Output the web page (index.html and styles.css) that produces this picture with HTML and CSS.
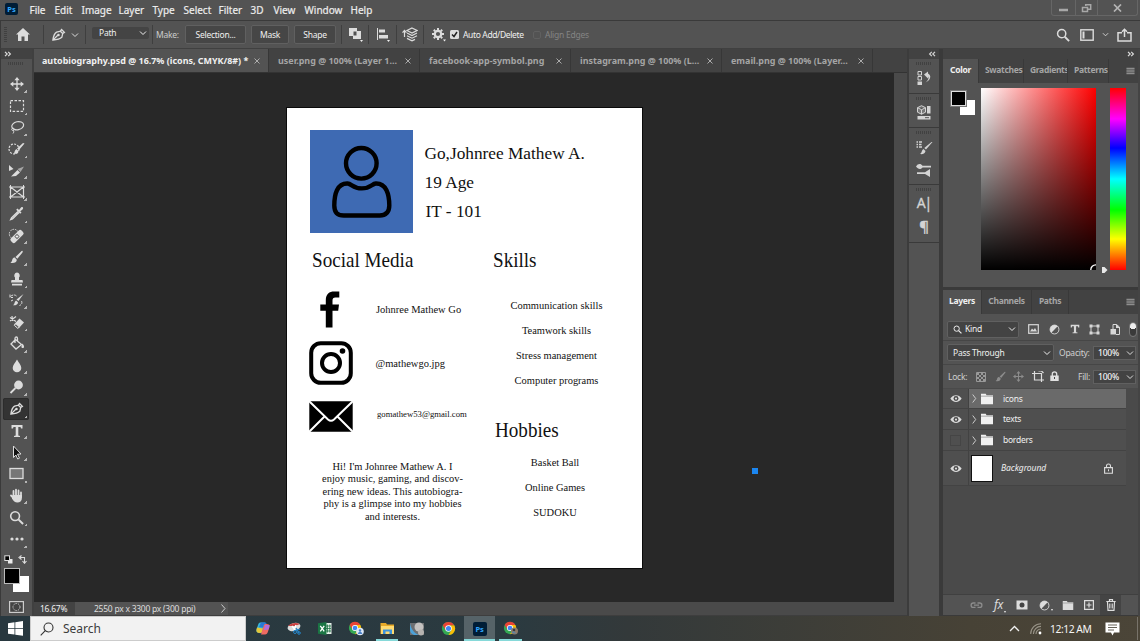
FILE: index.html
```html
<!DOCTYPE html>
<html lang="en">
<head>
<meta charset="utf-8">
<title>autobiography.psd</title>
<link rel="stylesheet" href="styles.css">
</head>
<body>
<svg class="sprite" aria-hidden="true">
  <symbol id="chev" viewBox="0 0 8 8"><path d="M1 2.500l3 3 3-3" fill="none" stroke="currentColor" stroke-width="1"/></symbol>
  <symbol id="close" viewBox="0 0 8 8"><path d="M1.500 1.500l5 5M6.500 1.500l-5 5" stroke="#b8b8b8" stroke-width=".9"/></symbol>
  <symbol id="menu" viewBox="0 0 10 8"><path d="M.5 1h9M.5 3h9M.5 5h9M.5 7h9" stroke="currentColor" stroke-width="1"/></symbol>
  <symbol id="dbl" viewBox="0 0 8 6"><path d="M1 .8L3.200 3 1 5.200M4.200 .8L6.400 3 4.200 5.200" fill="none" stroke="currentColor" stroke-width="1.200"/></symbol>
  <symbol id="pen" viewBox="0 0 16 16"><path d="M2 14c.5-4 1.500-7 4-8.500l4-1 2.500 2.500-1 4C9.500 13 6 13.700 2 14zM2 14l5.500-5.500M10 4.500l1.300-1.800 3 3-1.800 1.300" fill="none" stroke="currentColor" stroke-width="1.400"/><circle cx="8" cy="8.500" r="1.300" fill="currentColor"/></symbol>
  <symbol id="arrows" viewBox="0 0 16 16"><path d="M8 2v12M2 8h12" stroke="currentColor" stroke-width="1.500"/><path d="M8 0l3 3.800H5zM8 16l3-3.800H5zM0 8l3.800-3v6zM16 8l-3.800-3v6z" fill="currentColor"/></symbol>
  <symbol id="brush" viewBox="0 0 16 16"><path d="M14.800 1c.8.500.3 1.500-.4 2.400L9 10 6.800 8 13 2c.6-.6 1.200-1.300 1.800-1zM6 8.700L8.300 11c.3 3-3.300 4.500-7.300 3.500 2-1 1.800-2.200 2.300-3.800.5-1.400 1.500-2 2.700-2z" fill="currentColor"/></symbol>
  <symbol id="search" viewBox="0 0 16 16"><circle cx="6.500" cy="6.500" r="4.700" fill="none" stroke="currentColor" stroke-width="1.700"/><path d="M10 10l5 5" stroke="currentColor" stroke-width="2.100"/></symbol>
  <symbol id="folder" viewBox="0 0 16 14"><path d="M1 1h5.500l1 1.500H15V13H1z" fill="currentColor"/><path d="M1 3.700h14" stroke="#777" stroke-width=".7"/></symbol>
  <symbol id="eye" viewBox="0 0 16 12"><path d="M.5 6c3.500-6 11.500-6 15 0-3.500 6-11.500 6-15 0z" fill="currentColor"/><circle cx="8" cy="6" r="3.300" fill="#4b4b4b"/><circle cx="8" cy="6" r="1.500" fill="currentColor"/></symbol>
  <symbol id="adjust" viewBox="0 0 16 16"><circle cx="8" cy="8" r="6.500" fill="currentColor"/><path d="M3.400 12.600L12.600 3.400A6.500 6.500 0 0 1 3.400 12.600z" fill="#535353"/><circle cx="8" cy="8" r="6.500" fill="none" stroke="currentColor" stroke-width="1.200"/></symbol>
  <symbol id="frame" viewBox="0 0 16 14"><path d="M1.500 2h13v10h-13zM1.500 2l13 10M14.500 2l-13 10" fill="none" stroke="currentColor" stroke-width="1.200"/><path d="M0 2h2M14 2h2M0 12h2M14 12h2M1.500 0v2M14.500 0v2M1.500 12v2M14.500 12v2" stroke="currentColor"/></symbol>
  <symbol id="chrome" viewBox="0 0 16 16"><circle cx="8" cy="8" r="7" fill="#34a853"/><path d="M8 15l3-5.200L8 4.500h6.100A7 7 0 0 1 8 15z" fill="#fbbc05"/><path d="M1.900 4.500A7 7 0 0 1 14.100 4.500H8L5 7z" fill="#ea4335"/><path d="M1.900 4.500L5 9.800 8 8V4.500z" fill="#ea4335"/><circle cx="8" cy="8" r="3.500" fill="#fff"/><circle cx="8" cy="8" r="2.700" fill="#4285f4"/></symbol>
</svg>

<div class="app">
  <header class="menubar">
    <div class="ps-logo">Ps</div>
    <nav class="menus"><span>File</span><span>Edit</span><span>Image</span><span>Layer</span><span>Type</span><span>Select</span><span>Filter</span><span>3D</span><span>View</span><span>Window</span><span>Help</span></nav>
    <div class="window-controls">
      <span><svg width="9" height="8" viewBox="0 0 9 8"><path d="M0 6h9" stroke="#a8a8a8" stroke-width="2.500"/></svg></span>
      <span><svg width="11" height="10" viewBox="0 0 11 10"><path d="M4.700 3V1.700h5v4.500H7M1.500 4.500h5v4h-5z" fill="none" stroke="#a8a8a8" stroke-width="1.500"/></svg></span>
      <span><svg width="9" height="8" viewBox="0 0 9 8"><path d="M1 .5l7 7M8 .5l-7 7" stroke="#b4b4b4" stroke-width="1.700"/></svg></span>
    </div>
  </header>

  <div class="options">
    <i class="grip-v"></i>
    <svg class="home" width="14" height="13" viewBox="0 0 14 13"><path d="M7 0l7 6.500h-2V13H8.500V8.500h-3V13H2V6.500H0z" fill="#dcdcdc"/></svg>
    <i class="sep"></i>
    <svg class="opt-pen" width="15" height="15"><use href="#pen"/></svg>
    <svg class="opt-chev" width="8" height="8"><use href="#chev"/></svg>
    <i class="sep"></i>
    <div class="path-select"><span>Path</span><svg width="8" height="8"><use href="#chev"/></svg></div>
    <i class="sep"></i>
    <span class="make">Make:</span>
    <div class="btn btn-selection">Selection...</div>
    <div class="btn btn-mask">Mask</div>
    <div class="btn btn-shape">Shape</div>
    <i class="sep"></i>
    <svg class="opt-op" width="15" height="15" viewBox="0 0 15 15"><path d="M1 1h8v3h4v8H5V9H1z" fill="#dcdcdc"/><path d="M5.500 4.500h3v4h-3z" fill="#505050"/><path d="M12 13h3l-1.500 2z" fill="#eee"/></svg>
    <i class="sep"></i>
    <svg class="opt-align" width="15" height="15" viewBox="0 0 15 15"><path d="M1.500 1v12" stroke="#dcdcdc"/><path d="M3 2.500h6v3H3zM3 8h9v3.500H3z" fill="#dcdcdc"/><path d="M11 13h3l-1.500 2z" fill="#eee"/></svg>
    <i class="sep"></i>
    <svg class="opt-arrange" width="16" height="15" viewBox="0 0 16 15"><path d="M2.500 10V4M.5 5.700l2-2.200 2 2.200" fill="none" stroke="#dcdcdc" stroke-width="1.200"/><path d="M10 1l5 2.500-5 2.500-5-2.500zM5 6l5 2.500L15 6M5 8.700l5 2.500 5-2.500M5 11.400l5 2.500 3-1.500" fill="none" stroke="#dcdcdc" stroke-width="1.200"/></svg>
    <i class="sep"></i>
    <svg class="opt-gear" width="15" height="15" viewBox="0 0 15 15"><circle cx="6" cy="7" r="3.200" fill="none" stroke="#dcdcdc" stroke-width="2.200"/><path d="M6 1v2M6 11v2M0 7h2M10 7h2M1.800 2.800l1.400 1.400M8.800 9.800l1.400 1.400M10.200 2.800L8.800 4.200M3.200 9.800l-1.400 1.400" stroke="#dcdcdc" stroke-width="2"/><path d="M11 12.500h3l-1.500 2z" fill="#eee"/></svg>
    <svg class="check" width="9" height="9" viewBox="0 0 9 9"><rect width="9" height="9" rx="1.500" fill="#dcdcdc"/><path d="M2 4.500l2 2 3-4.500" fill="none" stroke="#222" stroke-width="1.500"/></svg>
    <span class="auto">Auto Add/Delete</span>
    <i class="uncheck"></i>
    <span class="align-edges">Align Edges</span>
    <div class="opt-right">
      <svg width="14" height="14"><use href="#search"/></svg>
      <svg width="14" height="12" viewBox="0 0 14 12"><rect x=".8" y=".8" width="12.400" height="10.400" fill="none" stroke="#dcdcdc" stroke-width="1.400"/><path d="M2.500 2.500h2v7h-2z" fill="#dcdcdc"/></svg>
      <svg width="7" height="7" viewBox="0 0 8 8"><use href="#chev"/></svg>
      <svg width="15" height="14" viewBox="0 0 15 14"><path d="M5 4.700H1V13h13V4.700h-4M7.500 9V1.500M5 3.700l2.500-2.500L10 3.700" fill="none" stroke="#dcdcdc" stroke-width="1.500"/></svg>
    </div>
  </div>

  <main class="workspace">
    <aside class="toolbar">
      <div class="tool-head"><svg width="8" height="6"><use href="#dbl"/></svg></div>
      <i class="grip"></i>
      <div class="tools">
        <div class="tool"><svg width="14" height="14"><use href="#arrows"/></svg></div>
        <div class="tool"><svg width="16" height="14" viewBox="0 0 16 14"><rect x="1.500" y="1.700" width="13" height="10.600" fill="none" stroke="currentColor" stroke-width="1.200" stroke-dasharray="2.500 1.500"/></svg></div>
        <div class="tool"><svg width="16" height="14" viewBox="0 0 16 14"><ellipse cx="8.700" cy="5.700" rx="6" ry="4" transform="rotate(-12 8.700 5.700)" fill="none" stroke="currentColor" stroke-width="1.200"/><path d="M4 8c-2 .5-1.500 3 .3 2.500C6 10 5 8 4 8zm.5 2.500c.5 1 .3 2-.5 3" fill="none" stroke="currentColor"/></svg></div>
        <div class="tool"><svg width="17" height="14" viewBox="0 0 17 14"><circle cx="6" cy="7" r="5" fill="none" stroke="currentColor" stroke-width="1.200" stroke-dasharray="2 1.300"/><path d="M16.500 1.500L11 8 9 6.500 15 1zM8.500 7l2 2c-.3 2.500-3 3-5 2.700 1.300-1 1-3.700 3-4.700z" fill="currentColor"/></svg></div>
        <div class="tool"><svg width="17" height="14" viewBox="0 0 17 14"><path d="M1 1l4.500 4L1 7z" fill="currentColor"/><path d="M3 12.500l6.500-6.500 2.500 2.500-4 3.500z" fill="currentColor"/><path d="M9.500 5L16 2.500 12.500 8z" fill="#a6a6a6"/></svg></div>
        <div class="tool"><svg width="16" height="14"><use href="#frame"/></svg></div>
        <div class="tool"><svg width="15" height="15" viewBox="0 0 15 15"><path d="M9 5.500l-6.500 6.300-.8 1.800 1.800-.7L10 6.500" fill="none" stroke="currentColor" stroke-width="1.400"/><path d="M8.500 2.500l4 4-1.300 1.300-4-4zM10 4l2-2.500c2-1.500 2.800.8 1.500 2L11 5.500z" fill="currentColor"/></svg></div>
        <div class="tool"><svg width="17" height="16" viewBox="0 0 17 16"><circle cx="6" cy="6" r="4.700" fill="none" stroke="currentColor" stroke-dasharray="1.500 1"/><rect x="1.500" y="5.500" width="15" height="6" rx="2" transform="rotate(-45 9 8.500)" fill="currentColor"/><path d="M6.300 8.500L9 5.800l2.700 2.700L9 11.200z" fill="#666"/><path d="M7.700 8.500h2.600M9 7.200v2.600" stroke="#eee"/></svg></div>
        <div class="tool"><svg width="15" height="14"><use href="#brush"/></svg></div>
        <div class="tool"><svg width="14" height="14" viewBox="0 0 14 14"><path d="M7 .5a3 3 0 0 1 2 5V8h3.500l.5 2.500H1L1.500 8H5V5.500A3 3 0 0 1 7 .5zM2 11.700h10v1.800H2z" fill="currentColor"/></svg></div>
        <div class="tool"><svg width="16" height="15" viewBox="0 0 16 15"><path d="M14.500 1L9.500 8l-2-1.500zM7 7.500l2 1.700c0 2.500-2.500 3.300-5 3C6 11 5 9 7 7.500z" fill="currentColor"/><path d="M1.500 3.500c2-2 4.500-2 6-.5M1 1.500v3h3M12.500 8c1 2 0 4-2 4.500M2 8l2-1" fill="none" stroke="currentColor" stroke-dasharray="3 1"/></svg></div>
        <div class="tool"><svg width="16" height="15" viewBox="0 0 16 15"><path d="M1 2.500l6 4M1 6l6-4.500M3 1l.5 5" stroke="currentColor" stroke-width="1.200"/><path d="M10.500 3.500l4.500 4-5.500 6L5 9.500z" fill="currentColor"/><path d="M6.800 8.700l3.500 3.200-1.500 1.500-3.500-3z" fill="#666" stroke="currentColor"/></svg></div>
        <div class="tool"><svg width="16" height="15" viewBox="0 0 16 15"><path d="M6.500 3.500l6 5-5.500 4.500-5-5zM6 7V2.500C6 .5 8.500.5 8.500 2.500V5" fill="none" stroke="currentColor" stroke-width="1.300"/><path d="M13.500 7.500c2 2.500 2 4.500.2 4.500s-1.500-2-.2-4.500z" fill="currentColor"/></svg></div>
        <div class="tool"><svg width="12" height="14" viewBox="0 0 12 14"><path d="M6 .5c2 3.500 4.300 5.500 4.300 8.500a4.300 4.300 0 0 1-8.600 0C1.700 6 4 4 6 .5z" fill="currentColor"/></svg></div>
        <div class="tool"><svg width="15" height="14" viewBox="0 0 15 14"><circle cx="9.500" cy="5" r="4.400" fill="currentColor"/><path d="M6.500 8L1.500 13" stroke="currentColor" stroke-width="1.800"/></svg></div>
        <div class="tool active"><svg width="15" height="15"><use href="#pen"/></svg></div>
        <div class="tool"><svg width="14" height="14" viewBox="0 0 14 14"><path d="M1.500 1h11v3.500h-1.500L10.500 3H8.300v8.500L10 12v1H4v-1l1.700-.5V3H3.500L3 4.500H1.500z" fill="currentColor"/></svg></div>
        <div class="tool"><svg width="12" height="15" viewBox="0 0 12 15"><path d="M2.500 1l7.500 8-3.500.2 2 4-1.800.8-1.800-4-2.400 2.500z" fill="#111" stroke="currentColor"/></svg></div>
        <div class="tool"><svg width="15" height="13" viewBox="0 0 15 13"><rect x="1" y="1.500" width="13" height="10" fill="#777" stroke="currentColor" stroke-width="1.300"/></svg></div>
        <div class="tool"><svg width="15" height="15" viewBox="0 0 15 15"><path d="M4.500 8V3M7 7V1.700M9.500 7.500V2.500M12 9V4.500M4.500 10L2 7.500" stroke="currentColor" stroke-width="1.800" stroke-linecap="round"/><path d="M3.600 7h9.300v3c0 3-2 4.500-4.500 4.500S4.500 13 3 10.500z" fill="currentColor"/></svg></div>
        <div class="tool"><svg width="15" height="15" viewBox="0 0 16 16"><use href="#search"/></svg></div>
        <div class="tool"><svg width="14" height="4" viewBox="0 0 14 4"><circle cx="2" cy="2" r="1.600" fill="currentColor"/><circle cx="7" cy="2" r="1.600" fill="currentColor"/><circle cx="12" cy="2" r="1.600" fill="currentColor"/></svg></div>
      </div>
      <div class="mini-colors">
        <svg width="9" height="9" viewBox="0 0 9 9"><path d="M4 4h4.500v4.500H4z" fill="#e8e8e8"/><rect x=".8" y=".8" width="4.700" height="4.700" fill="#000" stroke="#ddd"/></svg>
        <svg width="9" height="9" viewBox="0 0 9 9"><path d="M2 2.500h4.500v5M3.500.5L1 2.500l2.500 2M4.500 6l2 2.300L8.500 6" fill="none" stroke="#ddd" stroke-width="1.100"/></svg>
      </div>
      <div class="swatches"><i class="bg"></i><i class="fg"></i></div>
      <svg class="quickmask" width="15" height="12" viewBox="0 0 15 12"><rect x=".6" y=".6" width="13.800" height="10.800" fill="#444" stroke="#ccc" stroke-width="1.200"/><circle cx="7.500" cy="6" r="3.500" fill="none" stroke="#ccc" stroke-dasharray="1.500 1"/></svg>
    </aside>

    <section class="document">
      <div class="tabs">
        <div class="tab current"><span>autobiography.psd @ 16.7% (icons, CMYK/8#) *</span><svg width="8" height="8"><use href="#close"/></svg></div>
        <div class="tab"><span>user.png @ 100% (Layer 1...</span><svg width="8" height="8"><use href="#close"/></svg></div>
        <div class="tab"><span>facebook-app-symbol.png</span><svg width="8" height="8"><use href="#close"/></svg></div>
        <div class="tab"><span>instagram.png @ 100% (L...</span><svg width="8" height="8"><use href="#close"/></svg></div>
        <div class="tab"><span>email.png @ 100% (Layer...</span><svg width="8" height="8"><use href="#close"/></svg></div>
      </div>
      <div class="stage">
        <div class="canvas">
          <i class="anchor"></i>
          <article class="page">
            <div class="portrait"><svg width="103" height="103" viewBox="0 0 103 103"><g fill="none" stroke="#000" stroke-width="4.400"><circle cx="51.300" cy="33.300" r="15.300"/><path d="M37.500 53.500C27 53.200 24.300 64.500 24.300 75.500c0 7.500 3.500 10 9.500 10h36c6 0 9.500-3.500 9.500-10 0-11-3-22.300-13.500-22-4 .3-5 4.900-14 4.900s-10-4.700-14.300-4.900z"/></g></svg></div>
            <p class="intro name">Go,Johnree Mathew A.</p>
            <p class="intro age">19 Age</p>
            <p class="intro course">IT - 101</p>
            <h2 class="social">Social Media</h2>
            <h2 class="skills-title">Skills</h2>
            <h2 class="hobbies-title">Hobbies</h2>
            <svg class="facebook" width="20" height="37" viewBox="0 0 20 37"><path d="M5.800 36.500V19.700H.3v-6.200h5.500V9C5.800 3 9.500.5 14 .5h5.300v6h-4c-2 0-2.800 1-2.800 3v4h6.500l-.8 6.200h-5.700v16.800z"/></svg>
            <svg class="instagram" width="44" height="44" viewBox="0 0 44 44"><g fill="none" stroke="#000"><rect x="2.200" y="2.200" width="39.600" height="39.600" rx="9.500" stroke-width="4"/><circle cx="22" cy="22" r="9" stroke-width="4"/></g><circle cx="33.500" cy="10" r="2.800"/></svg>
            <svg class="mail" width="44" height="31" viewBox="0 0 44 31"><path d="M.3.300h43.400v30.400H.3z"/><path d="M0 0l19 18.500q3 2.500 6 0L44 0M0 31l15.500-15.500M44 31L28.500 15.500" fill="none" stroke="#fff" stroke-width="2"/></svg>
            <p class="handle fb-name">Johnree Mathew Go</p>
            <p class="handle ig-name">@mathewgo.jpg</p>
            <p class="handle mail-name">gomathew53@gmail.com</p>
            <ul class="list skills"><li>Communication skills</li><li>Teamwork skills</li><li>Stress management</li><li>Computer programs</li></ul>
            <ul class="list hobbies"><li>Basket Ball</li><li>Online Games</li><li>SUDOKU</li></ul>
            <p class="bio">Hi! I'm Johnree Mathew A. I<br>enjoy music, gaming, and discov-<br>ering new ideas. This autobiogra-<br>phy is a glimpse into my hobbies<br>and interests.</p>
          </article>
        </div>
        <div class="scroll-y"></div>
      </div>
      <div class="status"><span class="zoom">16.67%</span><span class="dims">2550 px x 3300 px (300 ppi)</span><svg width="6" height="9" viewBox="0 0 6 9"><path d="M1 .5l3.500 4L1 8.500" fill="none" stroke="#ccc"/></svg></div>
    </section>

    <aside class="strip">
      <div class="strip-head"><svg class="flip" width="8" height="6"><use href="#dbl"/></svg></div>
      <div class="group g1"><i class="grip"></i><svg width="14" height="16" viewBox="0 0 14 16"><path d="M1 1.500h3.500V5H1zM1 6.500h3.500V10H1z" fill="none" stroke="currentColor"/><path d="M.5 11.500H5V15H.5z" fill="currentColor"/><path d="M7 4.500l4-3v2c4 2 2.500 7-2.500 9 3-3 3.500-4.500 2.500-6v2z" fill="currentColor"/></svg></div>
      <div class="group g2"><i class="grip"></i><svg width="14" height="15" viewBox="0 0 14 15"><path d="M4.500.700l4 2v4.500l-4 2-4-2V2.700zM.5 2.700l4 2 4-2M4.500 4.700v4.500" fill="#777" stroke="currentColor"/><path d="M10 1h3.500v7.500H10zM.5 11h13v3.500H.5z" fill="currentColor"/><path d="M8 12.700h4" stroke="#555"/></svg></div>
      <div class="group g3"><i class="grip"></i><svg width="17" height="15" viewBox="0 0 17 15"><path d="M.5 2h1.500M3 2h3M.5 4.500h1.500M3 4.500h2.500M.5 7h1.500M3 7h3" stroke="currentColor" stroke-width="1.500"/><path d="M16.500 2L10 9.500 8.300 8 15.500 2zM7.500 9l2 2c-.5 3-3.500 3.500-5.500 3 2-1 1.500-4 3.500-5z" fill="currentColor"/></svg><svg width="16" height="14" viewBox="0 0 16 14"><path d="M0 3.500C2 0 5 .5 6.500 2.700H15v1.700H6.500C5 6.500 2 6.500 0 3.500zM1 9.200h8L14 6v8L9 11H1z" fill="currentColor"/></svg></div>
      <div class="group g4"><i class="grip"></i><span class="char">A|</span><span class="para">¶</span></div>
    </aside>

    <aside class="panels">
      <div class="panel-head"><svg width="8" height="6"><use href="#dbl"/></svg></div>
      <div class="panel-tabs color-tabs"><span class="on">Color</span><span>Swatches</span><span>Gradients</span><span>Patterns</span><svg width="9" height="8"><use href="#menu"/></svg></div>
      <div class="color-body">
        <div class="swatches small"><i class="bg"></i><i class="fg"></i></div>
        <div class="field"><svg width="6" height="6" viewBox="0 0 6 6"><path d="M.8 6A5 5 0 0 1 6 .8" fill="none" stroke="#fff" stroke-width="1.300"/></svg></div>
        <svg class="pointer" width="7" height="8" viewBox="0 0 7 8"><path d="M1 1h2.500l3 3-3 3H1z" fill="#e8e8e8"/></svg>
        <div class="hue"></div>
      </div>
      <div class="panel-tabs layer-tabs"><span class="on">Layers</span><span>Channels</span><span>Paths</span><svg width="9" height="8"><use href="#menu"/></svg></div>
      <div class="filter-row">
        <div class="select kind"><svg width="9" height="9" viewBox="0 0 16 16"><use href="#search"/></svg><span>Kind</span><svg width="8" height="8"><use href="#chev"/></svg></div>
        <div class="filters">
          <svg width="11" height="10" viewBox="0 0 11 10"><rect x=".7" y=".7" width="9.600" height="8.600" fill="none" stroke="#d8d8d8" stroke-width="1.200"/><path d="M2 7.500l2-3 1.500 1.500L7 4l2 3.500z" fill="#d8d8d8"/></svg>
          <svg width="11" height="11"><use href="#adjust"/></svg>
          <svg width="10" height="10" viewBox="0 0 14 14"><path d="M1 1h12v4h-1.500L11 3H8.500v8.500l2 .5v1h-7v-1l2-.5V3H3l-.5 2H1z" fill="#d8d8d8"/></svg>
          <svg width="11" height="11" viewBox="0 0 11 11"><rect x="2" y="2" width="7" height="7" fill="none" stroke="#d8d8d8"/><path d="M.5.500h3v3h-3zM7.500.500h3v3h-3zM.5 7.500h3v3h-3zM7.500 7.500h3v3h-3z" fill="#d8d8d8"/></svg>
          <svg width="10" height="11" viewBox="0 0 10 11"><path d="M3 .5h3.500L9.500 3v7.500H6M3 .5V5" fill="none" stroke="#d8d8d8"/><path d="M.5 5h5.500v5.500H.5zM6 0l4 4H6z" fill="#d8d8d8"/></svg>
        </div>
        <i class="switch"></i>
      </div>
      <div class="blend-row"><div class="select blend"><span>Pass Through</span><svg width="8" height="8"><use href="#chev"/></svg></div><span class="label">Opacity:</span><div class="num"><b>100%</b><svg width="8" height="8"><use href="#chev"/></svg></div></div>
      <div class="lock-row"><span class="label">Lock:</span>
        <div class="locks">
          <svg width="10" height="10" viewBox="0 0 10 10"><path d="M.5.500h9v9h-9z" fill="none" stroke="#999"/><path d="M1 1h2v2H1zM5 1h2v2H5zM3 3h2v2H3zM7 3h2v2H7zM1 5h2v2H1zM5 5h2v2H5zM3 7h2v2H3zM7 7h2v2H7z" fill="#999"/></svg>
          <svg class="dim" width="11" height="11"><use href="#brush"/></svg>
          <svg class="dim" width="11" height="11"><use href="#arrows"/></svg>
          <svg width="12" height="11" viewBox="0 0 12 11"><path d="M2.500 0v9H12M0 2.500h9.500V11M6.500 0h3l2 2" fill="none" stroke="#ddd" stroke-width="1.200"/></svg>
          <svg width="9" height="11" viewBox="0 0 9 11"><path d="M2.300 5V3a2.200 2.200 0 0 1 4.400 0v2" fill="none" stroke="#e0e0e0" stroke-width="1.300"/><path d="M.3 4.500h8.400V10H.3z" fill="#e0e0e0"/><path d="M4.500 6v2" stroke="#444"/></svg>
        </div>
        <span class="label">Fill:</span><div class="num"><b>100%</b><svg width="8" height="8"><use href="#chev"/></svg></div></div>
      <div class="layers">
        <div class="rows">
          <div class="layer selected"><div class="vis"><svg width="12" height="9"><use href="#eye"/></svg></div><div class="info"><svg width="5" height="9" viewBox="0 0 5 9"><path d="M.7.500l3 4-3 4" fill="none" stroke="#ccc"/></svg><svg width="14" height="12"><use href="#folder"/></svg><span>icons</span></div></div>
          <div class="layer"><div class="vis"><svg width="12" height="9"><use href="#eye"/></svg></div><div class="info"><svg width="5" height="9" viewBox="0 0 5 9"><path d="M.7.500l3 4-3 4" fill="none" stroke="#ccc"/></svg><svg width="14" height="12"><use href="#folder"/></svg><span>texts</span></div></div>
          <div class="layer"><div class="vis"><i class="hidden-box"></i></div><div class="info"><svg width="5" height="9" viewBox="0 0 5 9"><path d="M.7.500l3 4-3 4" fill="none" stroke="#ccc"/></svg><svg width="14" height="12"><use href="#folder"/></svg><span>borders</span></div></div>
          <div class="layer base"><div class="vis"><svg width="12" height="9"><use href="#eye"/></svg></div><div class="info"><i class="thumb"></i><em>Background</em><svg class="lock" width="9" height="11" viewBox="0 0 9 11"><path d="M2.500 4.500V3a2 2 0 0 1 4 0v1.500M.6 4.600h7.800v5.600H.6z" fill="none" stroke="#ddd" stroke-width="1.100"/><path d="M4.500 6.300v2" stroke="#ddd"/></svg></div></div>
        </div>
      </div>
      <div class="layer-actions">
        <svg width="13" height="8" viewBox="0 0 13 8"><path d="M5.500 2H3.300a2.200 2.200 0 0 0 0 4.400h2.200M7.500 2h2.200a2.200 2.200 0 0 1 0 4.400H7.500M4 4.200h5" fill="none" stroke="#8c8c8c" stroke-width="1.300"/></svg>
        <span class="fx">fx</span>
        <svg width="12" height="10" viewBox="0 0 12 10"><path d="M.5.500h11v9H.5z" fill="#ddd"/><circle cx="6" cy="5" r="2.500" fill="#444"/></svg>
        <span class="with-menu"><svg width="11" height="11"><use href="#adjust"/></svg></span>
        <svg width="12" height="11"><use href="#folder"/></svg>
        <svg width="10" height="10" viewBox="0 0 10 10"><path d="M.6.600h8.800v8.800H.6zM5 2.500v5M2.500 5h5" fill="none" stroke="#ddd" stroke-width="1.200"/></svg>
        <div class="trash"><svg width="10" height="12" viewBox="0 0 10 12"><path d="M.3 2.500h9.400M3.500 2V.7h3V2M1.500 3l.5 8.300h6L8.500 3M3.800 4.500v5M6.200 4.500v5" fill="none" stroke="#ddd" stroke-width="1.200"/></svg></div>
      </div>
    </aside>
  </main>

  <footer class="taskbar">
    <div class="start"><svg width="15" height="15" viewBox="0 0 15 15"><path d="M0 2.200L6.500 1.300V7H0zM7.300 1.200L15 0v7H7.300zM0 7.800h6.500v5.800L0 12.700zM7.300 7.800H15v7l-7.700-1.100z" fill="#fff"/></svg></div>
    <div class="searchbox"><svg width="14" height="14" viewBox="0 0 14 14"><circle cx="8.500" cy="5.500" r="4.500" fill="none" stroke="#333" stroke-width="1.100"/><path d="M5.300 8.700L.7 13.300" stroke="#333" stroke-width="1.100"/></svg><span>Search</span></div>
    <div class="apps">
      <div><svg width="14" height="13" viewBox="0 0 14 13"><path d="M5 .5h4L6.500 9C6 11 5 11.500 3.500 11 1 11 0 9.500.5 7.500L2 3C2.500 1 3.500.5 5 .5z" fill="#35b5dc"/><path d="M1 5.500l6 1L6 10c-.5 1-1.500 1.200-2.500 1C1 11 0 9.500.5 7.500z" fill="#e4c738"/><path d="M9 2c3.500-.5 5 .5 4.500 3L12 9.500c-.5 2-1.500 3-3 3H5L7.500 4C8 2.500 8 2 9 2z" fill="#ee6a62"/><path d="M5 .5h4c1 0 1.500.5 1.500 1.500C8 2 8 2.500 7.500 4L7 5.500 3 5z" fill="#2878d8"/><path d="M9 3h4.700L12.500 7.500 8 8z" fill="#b06be0"/></svg></div>
      <div><svg width="15" height="13" viewBox="0 0 15 13"><ellipse cx="7" cy="5" rx="6.500" ry="4" transform="rotate(-15 7 5)" fill="#ddd"/><path d="M1 4C4 1 9 0 13 2L8 4z" fill="#c94040"/><path d="M5 4l2.500 3M9 3L7 8" stroke="#fff" stroke-width="1.500"/><path d="M7 9l6-2M9 6l3 5" stroke="#2785c7" stroke-width="1.300"/><circle cx="8" cy="10" r="1.500" fill="none" stroke="#2785c7"/><circle cx="12" cy="11" r="1.300" fill="none" stroke="#2785c7"/></svg></div>
      <div><svg width="14" height="13" viewBox="0 0 14 13"><path d="M8 1h5.500v11H8z" fill="#e8f1eb"/><path d="M9.500 2.500v8M11.800 2.500v8M8 4h5M8 6.500h5M8 9h5" stroke="#217346" stroke-width=".8"/><path d="M0 1.300L8.500 0v13L0 11.700z" fill="#1b7544"/><path d="M2.300 3.800l3.900 5.500M6.200 3.800L2.300 9.300" stroke="#fff" stroke-width="1.300"/></svg></div>
      <div><svg width="16" height="15" viewBox="0 0 16 15"><use href="#chrome" width="14" height="14"/><circle cx="12" cy="10.500" r="3.800" fill="#dce8f8"/><circle cx="12" cy="9.500" r="1.200" fill="#4a82c8"/><path d="M9.800 13c.5-3 4-3 4.500 0z" fill="#4a82c8"/></svg></div>
      <div class="running"><svg width="15" height="13" viewBox="0 0 15 13"><path d="M.5 1H6l1 1.500h7V12H.5z" fill="#e7a928"/><path d="M1 4h13v8H1z" fill="#ffda70"/><path d="M3 7.500h9V12h-2.500V9.500h-4V12H3z" fill="#3d93dc"/></svg></div>
      <div><svg width="15" height="14" viewBox="0 0 15 14"><path d="M0 1h14v12H0z" fill="#6c6f72"/><circle cx="9" cy="5" r="4.500" fill="#c4c2c0"/><path d="M0 1c1 6 4 10 9 12H4C1 12 0 10 0 7z" fill="#4ca2d8"/><circle cx="11" cy="10.500" r="3" fill="#b5b2af"/></svg></div>
      <div><svg width="15" height="15" viewBox="0 0 16 16"><use href="#chrome"/></svg></div>
      <div class="running focused"><b class="task-ps">Ps</b></div>
      <div class="running"><svg width="16" height="15" viewBox="0 0 16 15"><use href="#chrome" width="14" height="14"/><circle cx="11.500" cy="10" r="3.500" fill="#8d7b68"/><circle cx="11" cy="9" r="1.300" fill="#3b3a3c"/><path d="M8.500 12l2-2 3 2.500z" fill="#5a85a6"/></svg></div>
    </div>
    <div class="tray">
      <svg width="11" height="7" viewBox="0 0 11 7"><path d="M1 6l4.500-4.500L10 6" fill="none" stroke="#f0f0f0" stroke-width="1.300"/></svg>
      <svg width="12" height="12" viewBox="0 0 12 12"><path d="M.7 11A10.300 10.300 0 0 1 11 .7M3.400 11A7.600 7.600 0 0 1 11 3.400M6 11a5 5 0 0 1 5-5" fill="none" stroke="#999488" stroke-width="1.100"/><circle cx="10" cy="10" r="1.400" fill="#fff"/></svg>
      <span>12:12 AM</span>
      <svg width="15" height="14" viewBox="0 0 15 14"><path d="M.5.500h14v10H9l-1.500 3-1.500-3H.5z" fill="#fff"/><path d="M3 3h9M3 5.500h9M3 8h6" stroke="#555045" stroke-width=".9"/></svg>
      <i></i>
    </div>
  </footer>
</div>
</body>
</html>
```
FILE: styles.css
```css
* { box-sizing: border-box; }
body { margin: 0; overflow: hidden; background: #282828; }
p, h2, ul { margin: 0; padding: 0; font-weight: 400; list-style: none; }
svg { display: block; flex: none; }
i { display: block; flex: none; }
.sprite { position: absolute; width: 0; height: 0; }

.app {
  width: 1140px; height: 641px;
  display: grid; grid-template-rows: 21px 28px 567px 25px;
  color: #dcdcdc; background: #535353;
  font: 8.500px/12px "Noto Sans", "Open Sans", sans-serif;
  letter-spacing: -.25px;
  white-space: nowrap;
}

/* menu bar */
.menubar { display: flex; align-items: center; border-bottom: 1px solid #3a3a3a; letter-spacing: 0; }
.ps-logo { margin-left: 5px; margin-top: -2px; width: 13px; height: 12px; border-radius: 2px; background: #001d36; color: #31a8ff; font: bold 7.500px/12px "Noto Sans", sans-serif; text-align: center; }
.menus { margin-left: 11.500px; margin-top: -1px; display: grid; grid-template-columns: 25px 27px 37px 34px 31px 35px 32px 23px 31px 46px 30px; color: #ececec; font-size: 10px; -webkit-text-stroke: .2px #ececec; }
.window-controls { margin: 0 2px 0 auto; height: 16px; align-self: flex-start; display: grid; grid-template-columns: 23px 22px 40px; border: 1px solid #666; border-top: 0; border-radius: 0 0 3px 3px; }
.window-controls span { display: flex; align-items: center; justify-content: center; }
.window-controls span + span { border-left: 1px solid #666; }

/* tool options */
.options { display: flex; align-items: center; border-bottom: 1px solid #404040; border-left: 1px solid #3a3a3a; }
.options .sep { width: 1px; height: 19px; background: #3f3f3f; }
.grip-v { width: 3px; height: 16px; margin-left: 3px; background: repeating-linear-gradient(#404040 0 1px, #535353 1px 2px); }
.home { margin: 0 13px 0 9px; }
.opt-pen { margin: 0 5px 0 7px; }
.opt-chev { margin-right: 6px; }
.path-select { margin: -4px 3px 0 6px; width: 57px; height: 12px; padding: 0 2px 0 7px; border-radius: 2px; background: #444; display: flex; align-items: center; justify-content: space-between; color: #f0f0f0; }
.make { margin-left: 3px; width: 29px; color: #ccc; }
.btn { height: 19px; border: 1px solid #606060; border-radius: 2px; background: #464646; color: #f0f0f0; text-align: center; line-height: 17px; margin-right: 5px; }
.btn-selection { width: 61px; }
.btn-mask { width: 38px; }
.btn-shape { width: 42px; }
.opt-op { margin: 0 5px 0 6px; }
.opt-align { margin: 0 5px 0 7px; }
.opt-arrange { margin: 0 5px 0 5px; }
.opt-gear { margin: 0 3px 0 8px; }
.auto { margin-left: 4px; width: 70px; color: #f0f0f0; letter-spacing: -.36px; }
.uncheck { width: 8px; height: 8px; border: 1px solid #606060; border-radius: 2px; }
.align-edges { margin-left: 4px; color: #848484; }
.opt-right { margin: 0 8px 0 auto; display: grid; grid-template-columns: 24px 22px 15px 15px; align-items: center; }

.workspace { display: grid; grid-template-columns: 34px 874px 33px 199px; min-height: 0; }

/* toolbar */
.toolbar { border-left: 1px solid #3a3a3a; border-right: 2px solid #404040; display: flex; flex-direction: column; align-items: stretch; }
.tool-head, .strip-head, .panel-head { height: 10px; background: #424242; display: flex; align-items: center; flex: none; }
.tool-head { padding-left: 3px; }
.grip { width: 16px; height: 3px; background: repeating-linear-gradient(90deg, #414141 0 1px, #535353 1px 2px); }
.toolbar > .grip { margin: 3px 0 8.200px 7px; }
.tools { display: grid; grid-template-rows: repeat(22, 21.670px); flex: none; }
.tool { position: relative; width: 26px; margin-left: 2px; display: flex; align-items: center; justify-content: center; border-radius: 2px; }
.tool > svg { margin-left: 1px; }
.tool::after { content: ""; position: absolute; right: 2px; bottom: 2px; width: 3px; height: 3px; background: linear-gradient(135deg, transparent 50%, #b5b5b5 50%); }
.tool.active { background: #333; outline: 1px solid #2c2c2c; outline-offset: -1px; }
.mini-colors { display: flex; gap: 5px; padding: 5px 0 0 3px; }
.swatches { position: relative; width: 26px; height: 25px; }
.swatches i { position: absolute; width: 16px; height: 16px; }
.swatches .fg { left: 0; top: 0; background: #000; border: 1px solid #bbb; }
.swatches .bg { left: 9px; top: 8px; background: #fff; }
.toolbar > .swatches { margin: 4px 0 0 3px; flex: none; }
.quickmask { margin: auto 0 3px 8px; }

/* document */
.document { display: grid; grid-template-rows: 24px 529px 14px; border-right: 1px solid #3c3c3c; min-width: 0; }
.tabs { display: grid; grid-template-columns: 235px 151px 151px 151px 151px 1fr; background: #424242; border-bottom: 1px solid #333; letter-spacing: 0; }
.tab { border-right: 1px solid #373737; display: flex; align-items: center; justify-content: space-between; padding: 1px 7px 0 9px; color: #a5a5a5; font-weight: 700; font-size: 8.950px; }
.tab.current { background: #535353; color: #f0f0f0; padding-left: 8px; }
.stage { display: grid; grid-template-columns: 860px 1fr; background: #282828; }
.canvas { position: relative; }
.scroll-y { background: #4a4a4a; }
.anchor { position: absolute; left: 718px; top: 395px; width: 6px; height: 6px; background: #1b86f0; }
.page { position: absolute; left: 253px; top: 35px; width: 355px; height: 460px; background: #fff; outline: 1px solid #0a0a0a; color: #111; font-family: "Liberation Serif", serif; letter-spacing: 0; }
.page > * { position: absolute; }
.portrait { left: 22.500px; top: 22px; width: 103px; height: 103px; background: #3e6ab3; }
.intro { left: 137.500px; font-size: 17.300px; line-height: 20px; }
.name { top: 36px; }
.age { top: 65px; }
.course { left: 138.500px; top: 94px; }
.page h2 { font-size: 21px; line-height: 24px; transform: scaleX(.91); transform-origin: 0 0; }
.social { left: 24.500px; top: 140px; }
.skills-title { left: 206px; top: 139.500px; }
.hobbies-title { left: 208px; top: 309.500px; }
.facebook { left: 33px; top: 182.500px; }
.instagram { left: 21.500px; top: 233px; }
.mail { left: 21.500px; top: 292.500px; }
.handle { font-size: 10.500px; line-height: 12px; }
.fb-name { left: 89px; top: 196px; }
.ig-name { left: 88.500px; top: 250px; }
.mail-name { left: 90px; top: 300px; font-size: 8.700px; }
.list { font-size: 10.450px; line-height: 25px; text-align: center; width: 120px; }
.skills { left: 209.500px; top: 185px; }
.hobbies { left: 208px; top: 342px; }
.bio { left: 25.500px; top: 352.500px; width: 160px; font-size: 10.450px; line-height: 12.500px; text-align: center; }
.status { display: flex; align-items: center; background: #4a4a4a; color: #ddd; border-bottom: 1px solid #3e3e3e; }
.zoom { width: 41px; padding-left: 6px; height: 13px; line-height: 14px; background: #434343; color: #f0f0f0; }
.dims { width: 144px; padding-left: 19px; height: 13px; line-height: 14px; background: #535353; }
.status svg { width: 9px; height: 13px; padding: 2px 0; background: #535353; }

/* collapsed icon strip */
.strip { border-right: 2px solid #3a3a3a; border-left: 1px solid #3c3c3c; color: #d4d4d4; }
.strip-head { justify-content: flex-end; padding-right: 3px; }
.flip { transform: scaleX(-1); }
.group { display: flex; flex-direction: column; align-items: center; border-bottom: 1px solid #3a3a3a; padding-top: 3px; }
.g1 { height: 35px; gap: 5px; }
.g2 { height: 34px; gap: 5px; }
.g3 { height: 57px; gap: 8px; }
.g4 { height: 58px; gap: 5px; }
.g3 .grip, .g4 .grip { margin-bottom: -2px; }
.char { font-size: 14px; line-height: 18px; letter-spacing: -1px; -webkit-text-stroke: .3px; }
.para { font-size: 15px; line-height: 18px; -webkit-text-stroke: .4px; }

/* panels */
.panels { border-left: 2px solid #3a3a3a; border-right: 2px solid #444; display: grid; grid-template-rows: 10px 24px 206px 25px 27px 24px 23px 206px 22px; min-height: 0; }
.panel-head { justify-content: flex-end; padding-right: 3px; }
.panel-tabs { display: grid; background: #424242; font-weight: 700; font-size: 8.500px; letter-spacing: -.33px; color: #a5a5a5; align-items: stretch; }
.panel-tabs span { border-right: 1px solid #393939; text-align: center; line-height: 22px; overflow: hidden; }
.panel-tabs .on { background: #535353; color: #f0f0f0; }
.panel-tabs svg { margin: auto 3px auto auto; color: #aaa; }
.color-tabs { grid-template-columns: 36px 45px 44px 41px 1fr; }
.color-tabs span:nth-child(n+2) { padding-left: 6px; text-align: left; }
.layer-tabs { grid-template-columns: 39px 50px 37px 1fr; border-top: 1px solid #3a3a3a; }
.color-body { display: grid; grid-template-columns: 38px 115px 14px 16px; padding-top: 5px; border-bottom: 2px solid #3a3a3a; }
.small { margin: 3px 0 0 8px; }
.small i { width: 15px; height: 15px; }
.small .fg { border: 1px solid #ddd; box-shadow: 0 0 0 1px #777; }
.small .bg { left: 9px; top: 9px; }
.field { height: 182px; background: linear-gradient(transparent, #000), linear-gradient(90deg, #fff, #f00); display: flex; align-items: flex-end; justify-content: flex-end; }
.pointer { margin: 178px 0 0 5px; }
.hue { height: 182px; background: linear-gradient(#f00, #f0f 17%, #00f 33%, #0ff 50%, #0f0 67%, #ff0 83%, #f00); }
.filter-row, .blend-row, .lock-row { display: flex; align-items: center; padding-left: 4px; }
.filter-row { padding-top: 4px; border-bottom: 1px solid #464646; }
.blend-row { border-bottom: 1px solid #464646; }
.select { height: 17px; padding: 0 2px 0 5px; border: 1px solid #606060; border-radius: 2px; background: #434343; display: flex; align-items: center; color: #f0f0f0; }
.select svg:last-child { margin-left: auto; }
.kind { width: 72px; gap: 3px; }
.blend { width: 107px; }
.filters { margin-left: 9px; width: 92px; display: flex; justify-content: space-between; align-items: center; }
.switch { margin-left: 9px; width: 8px; height: 15px; border-radius: 4px; border: 1px solid #777; background: radial-gradient(circle at 50% 3px, #eee 3px, #3a3a3a 3.500px); }
.label { color: #d0d0d0; }
.blend-row .label { width: 34px; margin-left: 5px; }
.num { width: 43px; height: 14px; display: grid; grid-template-columns: 29px 13px; align-items: center; border: 1px solid #606060; background: #434343; }
.num b { font-weight: 500; text-align: center; color: #f4f4f4; }
.num svg { margin: auto; }
.locks { display: grid; grid-template-columns: repeat(5, 18.500px); margin: 0 0 0 8px; align-items: center; width: 102px; }
.lock-row .label:first-child { width: 20px; margin-left: 1px; }
.lock-row .label:nth-child(3) { width: 13px; }
.lock-row .num { margin-left: 2px; }
.dim { color: #8c8c8c; }
.layers { background: #4a4a4a; padding-top: 1px; }
.rows { width: 183px; display: grid; grid-template-rows: 20px 21px 21px 35px; background: #424242; }
.layer { display: grid; grid-template-columns: 25px 157px; gap: 1px; border-bottom: 1px solid #434343; }
.vis { display: flex; align-items: center; justify-content: center; background: #4f4f4f; }
.info { display: flex; align-items: center; gap: 4px; padding-left: 3px; background: #4f4f4f; color: #f0f0f0; }
.info > svg + svg { margin-left: -1px; }
.info span { margin-left: 5px; }
.selected .info { background: #6a6a6a; }
.hidden-box { width: 11px; height: 11px; border: 1px solid #454545; }
.thumb { width: 22px; height: 27px; margin-left: -1px; background: #fff; border: 1px solid #111; }
.info em { margin-left: 4px; letter-spacing: -.05px; }
.info .lock { margin: 0 13px 0 auto; }
.layer-actions { border-top: 1px solid #404040; border-bottom: 1px solid #3a3a3a; display: grid; grid-template-columns: 22px 23px 23px 23px 23px 20px 23px; padding-left: 22px; align-items: center; justify-items: center; }
.fx, .with-menu { position: relative; }
.fx { font: italic 12px/16px "Noto Sans", sans-serif; }
.fx::after, .with-menu::after { content: ""; position: absolute; right: -3px; bottom: 0; border: 1.500px solid transparent; border-top: 2px solid #eee; border-bottom: 0; }
.trash { background: #444; width: 21px; height: 20px; display: grid; place-items: center; }

/* taskbar */
.taskbar { display: flex; align-items: stretch; background: linear-gradient(90deg, #28383f 0, #2b3a40 45%, #33393a 55%, #474236 85%, #4b4538 100%); letter-spacing: 0; }
.start { width: 30px; display: grid; place-items: center; }
.searchbox { width: 216px; background: #f2f2f2; border: 1px solid #ccc; display: flex; align-items: center; gap: 9px; padding-left: 9px; color: #3c3c3c; font-size: 12px; }
.apps { margin-left: 2px; display: grid; grid-template-columns: repeat(9, 30.900px); }
.apps > div { position: relative; display: grid; place-items: center; }
.running::after { content: ""; position: absolute; left: 4px; right: 4px; bottom: 0; height: 2px; background: #86d9d9; }
.focused { background: #566368; }
.focused::after { left: 0; right: 0; }
.task-ps { width: 14px; height: 14px; border-radius: 2px; background: #001d36; color: #31a8ff; font: bold 7.500px/14px "Noto Sans", sans-serif; text-align: center; }
.tray { margin-left: auto; display: grid; grid-template-columns: 21px 20px 55px 32px 3px; align-items: center; color: #f5f5f5; font-size: 10.300px; letter-spacing: -.45px; }
.tray i { width: 1px; height: 23px; background: #78736a; }
```
